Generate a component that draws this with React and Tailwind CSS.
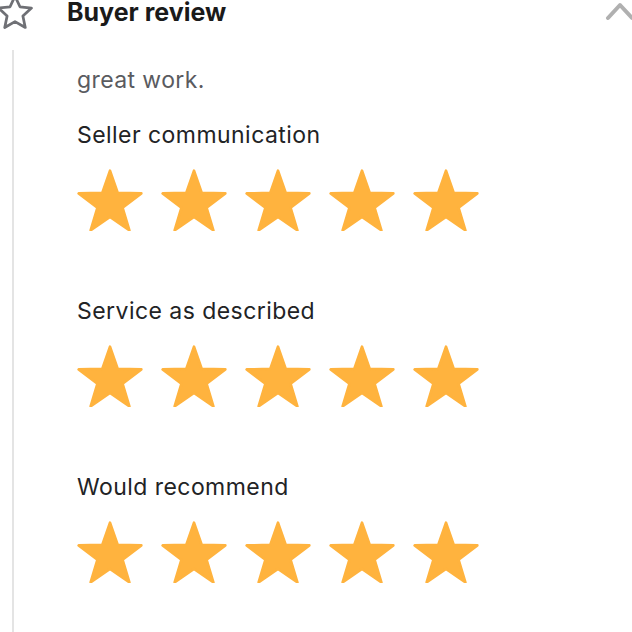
import React from "react";

function Star() {
  return (
    <svg width={66} height={62} viewBox="-1.0 -1.05 2.0 1.88" className="shrink-0">
      <path
        d="M0 -1 L0.235 -0.324 L0.951 -0.309 L0.381 0.124 L0.588 0.809 L0 0.4 L-0.588 0.809 L-0.381 0.124 L-0.951 -0.309 L-0.235 -0.324 Z"
        fill="#ffb33e"
        stroke="#ffb33e"
        strokeWidth="0.08"
        strokeLinejoin="round"
      />
    </svg>
  );
}

function Stars() {
  return (
    <div className="flex gap-[18px]">
      {[0, 1, 2, 3, 4].map((i) => (
        <Star key={i} />
      ))}
    </div>
  );
}

function Section({ label, first }) {
  return (
    <div className={first ? "" : "mt-[65px]"}>
      <div className="text-[23px] leading-[30px] text-[#222325] tracking-[0.45px]">{label}</div>
      <div className="mt-[19px]">
        <Stars />
      </div>
    </div>
  );
}

export default function App() {
  return (
    <div className="w-[632px] h-[632px] bg-white overflow-hidden relative" style={{ fontFamily: "Inter, 'Noto Sans', sans-serif" }}>
      <div className="flex items-start h-[50px] relative">
        <svg width="46" height="44" viewBox="0 0 24 24" className="absolute left-[-8px] top-[-9px]">
          <path
            d="M12 2.8 L14.7 8.6 L21 9.3 L16.3 13.6 L17.6 19.9 L12 16.7 L6.4 19.9 L7.7 13.6 L3 9.3 L9.3 8.6 Z"
            fill="none"
            stroke="#6f7075"
            strokeWidth="1.5"
            strokeLinejoin="round"
          />
        </svg>
        <div className="ml-[67px] text-[25px] leading-[24px] font-bold text-[#1a1a1a]">Buyer review</div>
        <svg width="40" height="24" viewBox="0 0 40 24" className="absolute left-[603px] top-[-2px]">
          <path d="M5 20 L17 7 L29 20" fill="none" stroke="#b0b0b0" strokeWidth="4" strokeLinecap="round" strokeLinejoin="round" />
        </svg>
      </div>
      <div className="flex">
        <div className="w-[12px] shrink-0" />
        <div className="w-[2px] h-[600px] bg-[#e4e4e4] shrink-0" />
        <div className="pl-[63px] pt-[15px]">
          <div className="text-[23px] leading-[30px] text-[#5a5b5f] tracking-[0.4px]">great work.</div>
          <div className="mt-[25px]">
            <Section label="Seller communication" first />
            <Section label="Service as described" />
            <Section label="Would recommend" />
          </div>
        </div>
      </div>
    </div>
  );
}
